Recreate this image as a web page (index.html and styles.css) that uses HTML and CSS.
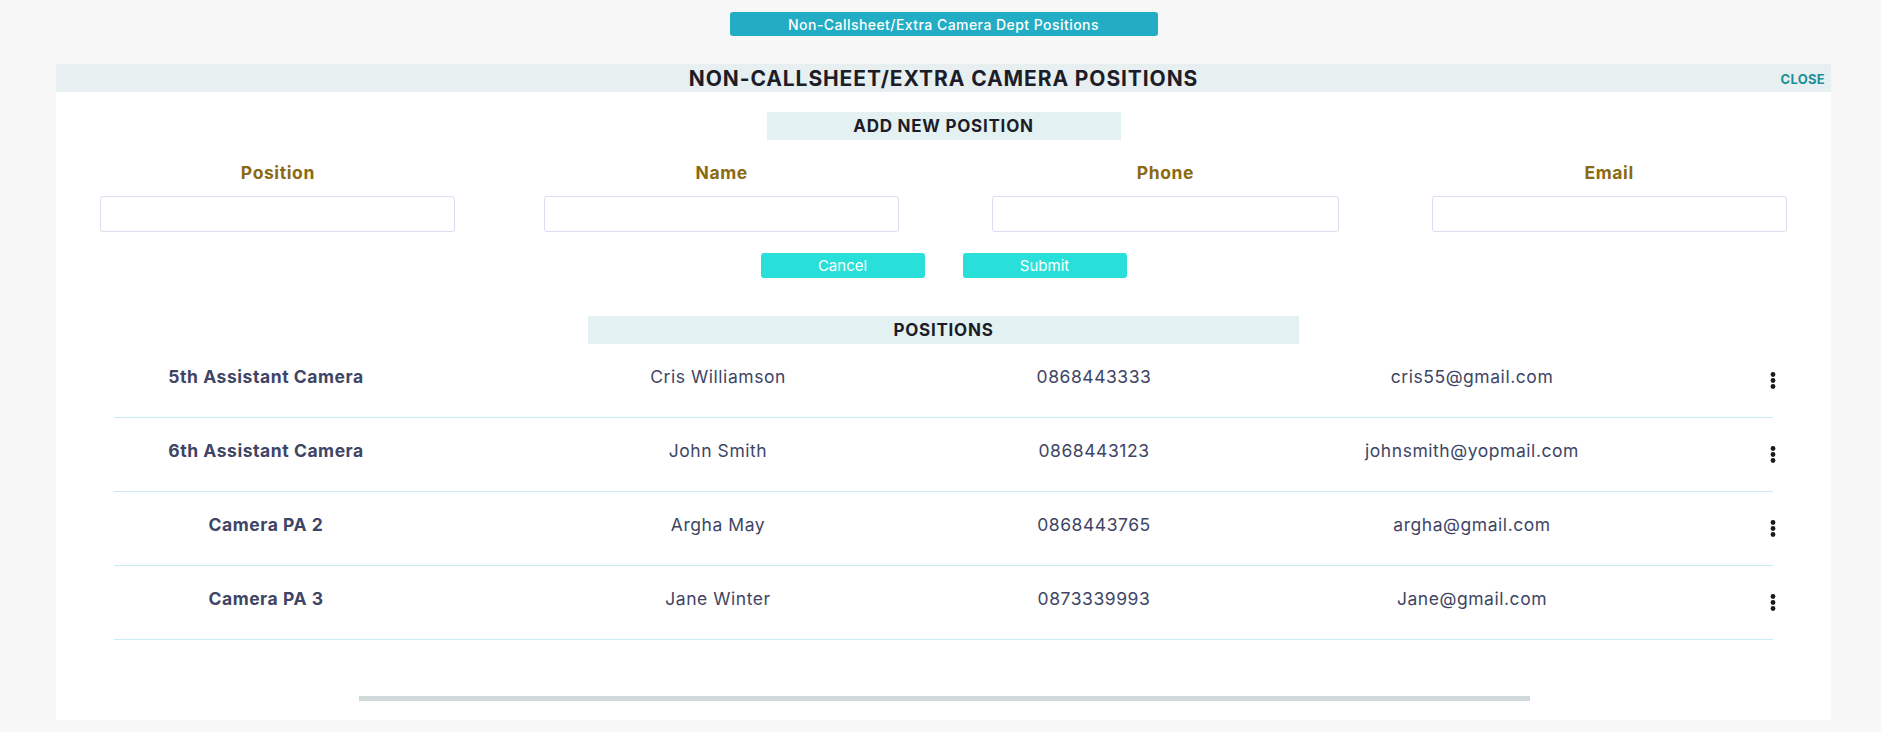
FILE: index.html
```html
<!DOCTYPE html>
<html>
<head>
<meta charset="utf-8">
<link rel="stylesheet" href="styles.css">
</head>
<body>
<div class="page">
  <div class="top">
    <button class="top-btn">Non-Callsheet/Extra Camera Dept Positions</button>
  </div>
  <div class="modal">
    <div class="modal-head">
      <h1 class="modal-title">NON-CALLSHEET/EXTRA CAMERA POSITIONS</h1>
      <a class="close">CLOSE</a>
    </div>
    <div class="band band-add">ADD NEW POSITION</div>
    <div class="form-grid">
      <div class="field"><label>Position</label><input type="text"></div>
      <div class="field"><label>Name</label><input type="text"></div>
      <div class="field"><label>Phone</label><input type="text" class="narrow"></div>
      <div class="field"><label>Email</label><input type="text"></div>
    </div>
    <div class="actions">
      <button class="act">Cancel</button>
      <button class="act">Submit</button>
    </div>
    <div class="band band-pos">POSITIONS</div>
    <div class="table">
      <div class="row">
        <div class="cell pos">5th Assistant Camera</div>
        <div class="cell">Cris Williamson</div>
        <div class="cell">0868443333</div>
        <div class="cell">cris55@gmail.com</div>
        <div class="menu"><svg width="6" height="17" viewBox="0 0 6 17"><circle cx="3" cy="2.5" r="2.4"/><circle cx="3" cy="8.5" r="2.4"/><circle cx="3" cy="14.5" r="2.4"/></svg></div>
      </div>
      <div class="row">
        <div class="cell pos">6th Assistant Camera</div>
        <div class="cell">John Smith</div>
        <div class="cell">0868443123</div>
        <div class="cell">johnsmith@yopmail.com</div>
        <div class="menu"><svg width="6" height="17" viewBox="0 0 6 17"><circle cx="3" cy="2.5" r="2.4"/><circle cx="3" cy="8.5" r="2.4"/><circle cx="3" cy="14.5" r="2.4"/></svg></div>
      </div>
      <div class="row">
        <div class="cell pos">Camera PA 2</div>
        <div class="cell">Argha May</div>
        <div class="cell">0868443765</div>
        <div class="cell">argha@gmail.com</div>
        <div class="menu"><svg width="6" height="17" viewBox="0 0 6 17"><circle cx="3" cy="2.5" r="2.4"/><circle cx="3" cy="8.5" r="2.4"/><circle cx="3" cy="14.5" r="2.4"/></svg></div>
      </div>
      <div class="row">
        <div class="cell pos">Camera PA 3</div>
        <div class="cell">Jane Winter</div>
        <div class="cell">0873339993</div>
        <div class="cell">Jane@gmail.com</div>
        <div class="menu"><svg width="6" height="17" viewBox="0 0 6 17"><circle cx="3" cy="2.5" r="2.4"/><circle cx="3" cy="8.5" r="2.4"/><circle cx="3" cy="14.5" r="2.4"/></svg></div>
      </div>
    </div>
    <div class="scroll-wrap"><div class="scroll-thumb"></div></div>
  </div>
</div>
</body>
</html>
```

FILE: styles.css
```css
* { box-sizing: border-box; }
html, body {
  margin: 0;
  padding: 0;
  background: #f7f7f7;
  font-family: "Inter", "Noto Sans", "Liberation Sans", sans-serif;
}
.page {
  margin: 0 50px 0 56px;
  padding-top: 12px;
  height: 732px;
}
.top {
  display: flex;
  justify-content: center;
  height: 24px;
}
.top-btn {
  width: 428px;
  height: 24px;
  border: none;
  border-radius: 3px;
  background: #22adc4;
  color: #fff;
  font-family: inherit;
  font-size: 14px;
  font-weight: 500;
  letter-spacing: 0.45px;
  padding: 0;
}
.modal {
  margin-top: 28px;
  background: #fff;
  height: 656px;
}
.modal-head {
  position: relative;
  height: 28px;
  background: #e7eff0;
  display: flex;
  align-items: center;
  justify-content: center;
}
.modal-title {
  margin: 0;
  font-size: 21px;
  font-weight: 700;
  color: #1d1d29;
  letter-spacing: 0.9px;
}
.close {
  position: absolute;
  right: 6px;
  top: 7px;
  font-size: 13px;
  font-weight: 700;
  color: #1d8f98;
  letter-spacing: 0.3px;
}
.band {
  margin: 0 auto;
  height: 28px;
  background: #e3f1f2;
  display: flex;
  align-items: center;
  justify-content: center;
  font-size: 17px;
  font-weight: 700;
  color: #1d1d29;
  letter-spacing: 0.75px;
}
.band-add {
  margin-top: 20px;
  width: 354px;
}
.form-grid {
  margin-top: 22px;
  display: grid;
  grid-template-columns: repeat(4, 1fr);
}
.field {
  display: flex;
  flex-direction: column;
  align-items: center;
}
.field label {
  height: 22px;
  line-height: 22px;
  font-size: 17.5px;
  font-weight: 700;
  color: #8a6a12;
  letter-spacing: 0.6px;
}
.field input {
  margin-top: 12px;
  width: 355px;
  height: 36px;
  border: 1px solid #dcdcf2;
  border-radius: 3px;
  background: #fff;
}
.field input.narrow {
  width: 347px;
}
.actions {
  margin-top: 21px;
  display: flex;
  justify-content: center;
  gap: 38px;
}
.act {
  width: 164px;
  height: 25px;
  border: none;
  border-radius: 3px;
  background: #28dfd9;
  color: #fff;
  font-family: inherit;
  font-size: 15px;
  padding: 0;
}
.band-pos {
  margin-top: 38px;
  width: 711px;
}
.table {
  margin: 0 58px;
}
.row {
  display: grid;
  grid-template-columns: 304px 600px 152px 604px 0px;
  align-items: center;
  height: 74px;
  border-bottom: 1px solid #c9ecf0;
}
.cell {
  text-align: center;
  font-size: 17.5px;
  letter-spacing: 0.55px;
  color: #3e4565;
  padding-bottom: 9px;
  white-space: nowrap;
}
.cell.pos {
  font-weight: 700;
}
.menu {
  display: flex;
  margin-left: -4px;
  width: 6px;
}
.menu svg {
  fill: #1a1a1a;
}
.scroll-wrap {
  margin-top: 56px;
  padding-left: 303px;
}
.scroll-thumb {
  width: 1171px;
  height: 5px;
  background: #d0d8d9;
}
```
